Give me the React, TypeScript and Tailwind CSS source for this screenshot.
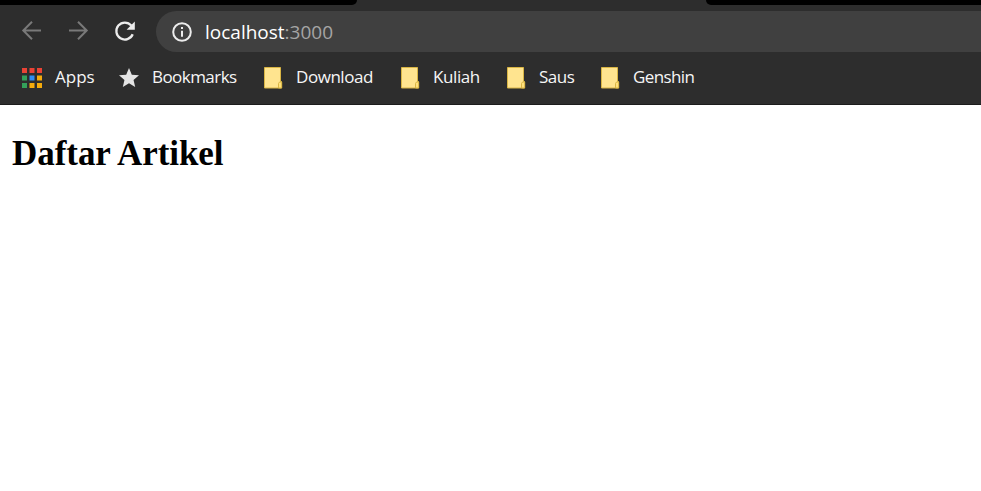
import React from "react";

function AppsIcon() {
  const colors = ["#ea4335", "#ea4335", "#ea4335", "#34a05a", "#2f8df5", "#f5ab0c", "#34a05a", "#f5ab0c", "#f5ab0c"];
  return (
    <svg width="20" height="20" viewBox="0 0 20 20" className="block">
      {colors.map((c, i) => (
        <rect key={i} x={(i % 3) * 7.5} y={Math.floor(i / 3) * 7.5} width="5" height="5" fill={c} />
      ))}
    </svg>
  );
}

function StarIcon() {
  return (
    <svg width="20" height="19" viewBox="2 2 20 19" preserveAspectRatio="none" fill="#e4e4e4" className="block">
      <path d="M12 17.27 18.18 21l-1.64-7.03L22 9.24l-7.19-.61L12 2 9.19 8.63 2 9.24l5.46 4.73L5.82 21z" />
    </svg>
  );
}

function FolderIcon() {
  return (
    <svg width="19" height="22" viewBox="0 0 19 22" className="block">
      <path d="M.5.5h16v14h1v6.5H.5z" fill="#ffe48f" stroke="#d9b544" />
      <path d="M14.5 21v-4.5l1-1.5h2.2v6z" fill="#ffe07c" stroke="#d9b544" />
    </svg>
  );
}

const label = "block whitespace-nowrap pb-[2px] text-[17px] leading-6 text-[#f6f6f6]";

export default function App() {
  return (
    <div className="h-[491px] w-[981px] overflow-hidden bg-white font-['Open_Sans','Noto_Sans',sans-serif]">
      <header className="h-[105px] border-b border-[#1c1c1c] bg-[#2d2d2d]">
        <div className="flex h-[5px] justify-between">
          <div className="w-[357px] rounded-br-[8px] bg-black" />
          <div className="w-[275px] rounded-bl-[8px] bg-black" />
        </div>
        <div className="flex h-[47px] items-start pt-[6px]">
          <svg width="156" height="41" viewBox="0 11 156 41" fill="none" className="shrink-0">
            <g stroke="#797979" strokeWidth="2">
              <path d="M41 30.5H23.5M32 21.8l-8.7 8.7 8.7 8.7" />
              <path d="M69 30.5h17.5M78 21.8l8.7 8.7-8.7 8.7" />
            </g>
            <path d="M131.3 25.5A8.5 8.5 0 1 0 132.7 34.3" stroke="#ececec" strokeWidth="2.3" />
            <path d="M134.8 21.5v8.2h-8.2z" fill="#ececec" />
          </svg>
          <div className="flex h-[41px] flex-1 items-center rounded-l-full bg-[#404040] pl-[16px]">
            <svg width="20" height="20" viewBox="0 0 20 20" className="shrink-0">
              <circle cx="10" cy="10" r="8.8" fill="none" stroke="#ececec" strokeWidth="2" />
              <path d="M9 5h2v2H9zM9 8.8h2v6H9z" fill="#ececec" />
            </svg>
            <span className="ml-[13px] text-[19px] leading-[26px] text-white">
              localhost<span className="text-[#a5a5a5]">:3000</span>
            </span>
          </div>
        </div>
        <nav className="flex h-[51px] items-center pl-[22px]">
          <div className="flex w-[97px] items-center gap-[13px]">
            <AppsIcon />
            <span className={label}>Apps</span>
          </div>
          <div className="flex w-[145px] items-center gap-[13px]">
            <StarIcon />
            <span className={`${label} tracking-[-0.55px]`}>Bookmarks</span>
          </div>
          <div className="flex w-[137px] items-center gap-[13px]">
            <FolderIcon />
            <span className={`${label} tracking-[-0.45px]`}>Download</span>
          </div>
          <div className="flex w-[106px] items-center gap-[13px]">
            <FolderIcon />
            <span className={`${label} tracking-[-0.4px]`}>Kuliah</span>
          </div>
          <div className="flex w-[94px] items-center gap-[13px]">
            <FolderIcon />
            <span className={`${label} tracking-[-0.5px]`}>Saus</span>
          </div>
          <div className="flex items-center gap-[13px]">
            <FolderIcon />
            <span className={`${label} tracking-[-0.6px]`}>Genshin</span>
          </div>
        </nav>
      </header>
      <main className="px-3 pt-[28px]">
        <h2 className="font-['Liberation_Serif','Times_New_Roman',serif] text-[35px] leading-[41px] font-bold tracking-[-0.05px] text-black">
          Daftar Artikel
        </h2>
      </main>
    </div>
  );
}
